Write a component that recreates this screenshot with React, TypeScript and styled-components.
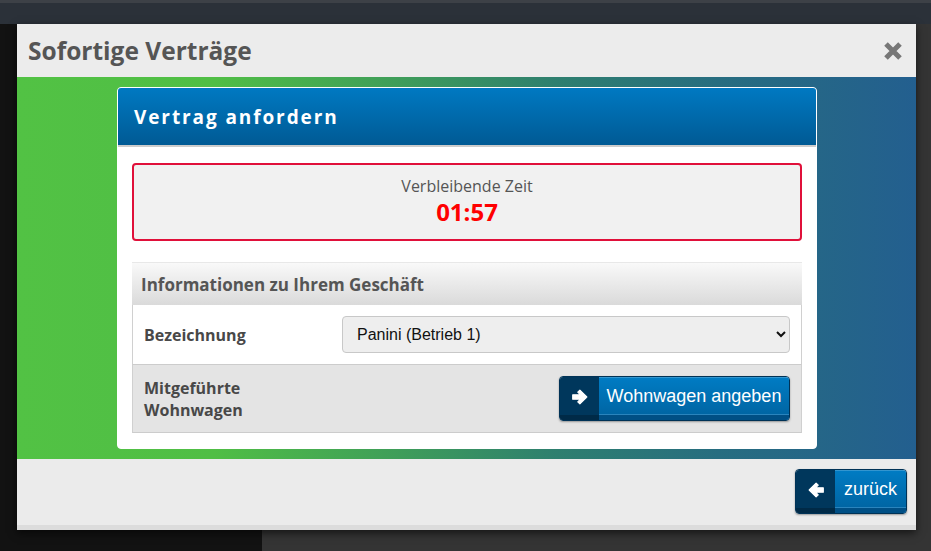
import styled, { createGlobalStyle } from "styled-components"

const GlobalStyle = createGlobalStyle`
    html, body {
        margin: 0;
        padding: 0;
        width: 931px;
        height: 551px;
        overflow: hidden;
        font-family: "Open Sans", "Liberation Sans", sans-serif;
        background:
            linear-gradient(to bottom, #3d4147 0, #3d4147 3px, #2b3139 3px, #2b3139 24px, transparent 24px),
            linear-gradient(to right, #121212 0, #121212 262px, #343434 262px);
    }
`

const Page = styled.div`
    box-sizing: border-box;
    height: 551px;
    padding: 24px 15px 0 17px;
`

const Dialog = styled.div`
    width: 899px;
    display: flex;
    flex-direction: column;
    box-shadow: 0 3px 8px rgba(0, 0, 0, 0.6);
`

const DialogHeader = styled.div`
    height: 53px;
    background: #ececec;
    display: flex;
    align-items: center;
    justify-content: space-between;
    padding: 0 13px 0 11px;
`

const DialogTitle = styled.h2`
    margin: 0;
    font-family: "Open Sans", sans-serif;
    font-weight: 700;
    font-size: 24.5px;
    color: #555;
`

const CloseButton = styled.button`
    border: 0;
    background: none;
    padding: 0;
    width: 20px;
    height: 20px;
    cursor: pointer;
    display: flex;
`

const Stage = styled.div`
    height: 382px;
    box-sizing: border-box;
    padding: 10px 0 0 100px;
    background: linear-gradient(to right, #52c244 0%, #50be45 22%, #3f9e59 42%, #2e7f6f 60%, #276d80 78%, #235f8f 100%);
`

const Card = styled.div`
    width: 700px;
    box-sizing: border-box;
    background: #fff;
    border: 1px solid #fff;
    border-radius: 4px;
    overflow: hidden;
`

const CardHeader = styled.div`
    height: 59px;
    box-sizing: border-box;
    background: linear-gradient(to bottom, #0079c2, #005a94);
    border-bottom: 2px solid #cccccc;
    display: flex;
    align-items: center;
    padding-left: 16px;
    color: #fff;
    font-family: "Open Sans", sans-serif;
    font-weight: 700;
    font-size: 19px;
    letter-spacing: 1.9px;
`

const CardBody = styled.div`
    padding: 16px 14px 15px 14px;
`

const TimerBox = styled.div`
    height: 78px;
    box-sizing: border-box;
    border: 2px solid #e0103a;
    border-radius: 4px;
    background: #f1f1f1;
    display: flex;
    flex-direction: column;
    align-items: center;
    justify-content: center;
    padding-bottom: 2px;
`

const TimerLabel = styled.div`
    font-size: 16px;
    line-height: 21px;
    color: #555;
`

const TimerValue = styled.div`
    font-size: 24px;
    line-height: 30px;
    font-weight: 700;
    color: #ff0000;
`

const Section = styled.div`
    margin-top: 21px;
`

const SectionHeader = styled.div`
    height: 43px;
    box-sizing: border-box;
    border-top: 1px solid #e8e8e8;
    background: linear-gradient(to bottom, #f9f9f9, #dadada);
    display: flex;
    align-items: center;
    padding-left: 9px;
    font-size: 17px;
    font-weight: 700;
    color: #555;
`

const Row = styled.div<{ $height: number; $shade?: boolean }>`
    height: ${({ $height }) => $height}px;
    box-sizing: border-box;
    display: grid;
    grid-template-columns: 198px 1fr;
    align-items: center;
    padding: 0 11px;
    background: ${({ $shade }) => ($shade ? "#e4e4e4" : "#fff")};
    border-left: 1px solid #d0d0d0;
    border-right: 1px solid #d0d0d0;
    border-bottom: 1px solid #cccccc;
`

const Label = styled.div`
    font-size: 16px;
    line-height: 22px;
    font-weight: 700;
    color: #484848;
`

const Select = styled.select`
    height: 37px;
    width: 100%;
    box-sizing: border-box;
    background: #eeeeee;
    border: 1px solid #c8c8c8;
    border-radius: 4px;
    padding: 0 8px 0 10px;
    font-family: "Liberation Sans", Arial, sans-serif;
    font-size: 16px;
    color: #111;
`

const Actions = styled.div`
    display: flex;
    justify-content: flex-end;
`

const Button = styled.button<{ $width: number }>`
    width: ${({ $width }) => $width}px;
    height: 45px;
    padding: 0;
    border: 1px solid #003256;
    border-radius: 4px;
    overflow: hidden;
    display: flex;
    cursor: pointer;
    box-shadow: 0 1px 2px rgba(0, 0, 0, 0.35);
    background: none;
`

const ButtonIcon = styled.span`
    width: 39px;
    display: flex;
    align-items: center;
    justify-content: center;
    padding-bottom: 3px;
    background: #00375c;
    box-shadow: inset 0 -5px 0 #002a47;
`

const ButtonText = styled.span`
    flex: 1;
    display: flex;
    align-items: center;
    justify-content: center;
    padding-bottom: 4px;
    background: linear-gradient(to bottom, #007cc4, #00629f);
    box-shadow: inset 0 -5px 0 #004f85, inset 0 -6px 0 #2a84bd, inset 0 1px 0 rgba(255, 255, 255, 0.2);
    color: #fff;
    font-family: "Liberation Sans", Arial, sans-serif;
    font-size: 18px;
`

const Footer = styled.div`
    height: 71px;
    box-sizing: border-box;
    background: #ebebeb;
    border-bottom: 5px solid #dcdcdc;
    display: flex;
    justify-content: flex-end;
    padding: 10px 9px 0 0;
`

function CloseIcon() {
    return (
        <svg width="20" height="20" viewBox="0 0 20 20">
            <path d="M3 3 L17 17 M17 3 L3 17" stroke="#777" strokeWidth="5" strokeLinecap="butt" />
        </svg>
    )
}

function ArrowIcon({ left }: { left?: boolean }) {
    return (
        <svg width="18" height="18" viewBox="0 0 16 16" style={left ? { transform: "scaleX(-1)" } : undefined}>
            <path
                d="M1.5 6.1 H8.4 L6 3.7 L7.9 1.8 L14.1 8 L7.9 14.2 L6 12.3 L8.4 9.9 H1.5 Z"
                fill="#fff"
                stroke="#fff"
                strokeWidth="1"
                strokeLinejoin="round"
            />
        </svg>
    )
}

export default function App() {
    return (
        <>
            <GlobalStyle />
            <Page>
                <Dialog>
                    <DialogHeader>
                        <DialogTitle>Sofortige Verträge</DialogTitle>
                        <CloseButton aria-label="schließen">
                            <CloseIcon />
                        </CloseButton>
                    </DialogHeader>

                    <Stage>
                        <Card>
                            <CardHeader>Vertrag anfordern</CardHeader>
                            <CardBody>
                                <TimerBox>
                                    <TimerLabel>Verbleibende Zeit</TimerLabel>
                                    <TimerValue>01:57</TimerValue>
                                </TimerBox>

                                <Section>
                                    <SectionHeader>Informationen zu Ihrem Geschäft</SectionHeader>
                                    <Row $height={60}>
                                        <Label>Bezeichnung</Label>
                                        <Select defaultValue="1">
                                            <option value="1">Panini (Betrieb 1)</option>
                                        </Select>
                                    </Row>
                                    <Row $height={68} $shade>
                                        <Label>
                                            Mitgeführte
                                            <br />
                                            Wohnwagen
                                        </Label>
                                        <Actions>
                                            <Button $width={231}>
                                                <ButtonIcon>
                                                    <ArrowIcon />
                                                </ButtonIcon>
                                                <ButtonText>Wohnwagen angeben</ButtonText>
                                            </Button>
                                        </Actions>
                                    </Row>
                                </Section>
                            </CardBody>
                        </Card>
                    </Stage>

                    <Footer>
                        <Button $width={112}>
                            <ButtonIcon>
                                <ArrowIcon left />
                            </ButtonIcon>
                            <ButtonText>zurück</ButtonText>
                        </Button>
                    </Footer>
                </Dialog>
            </Page>
        </>
    )
}
